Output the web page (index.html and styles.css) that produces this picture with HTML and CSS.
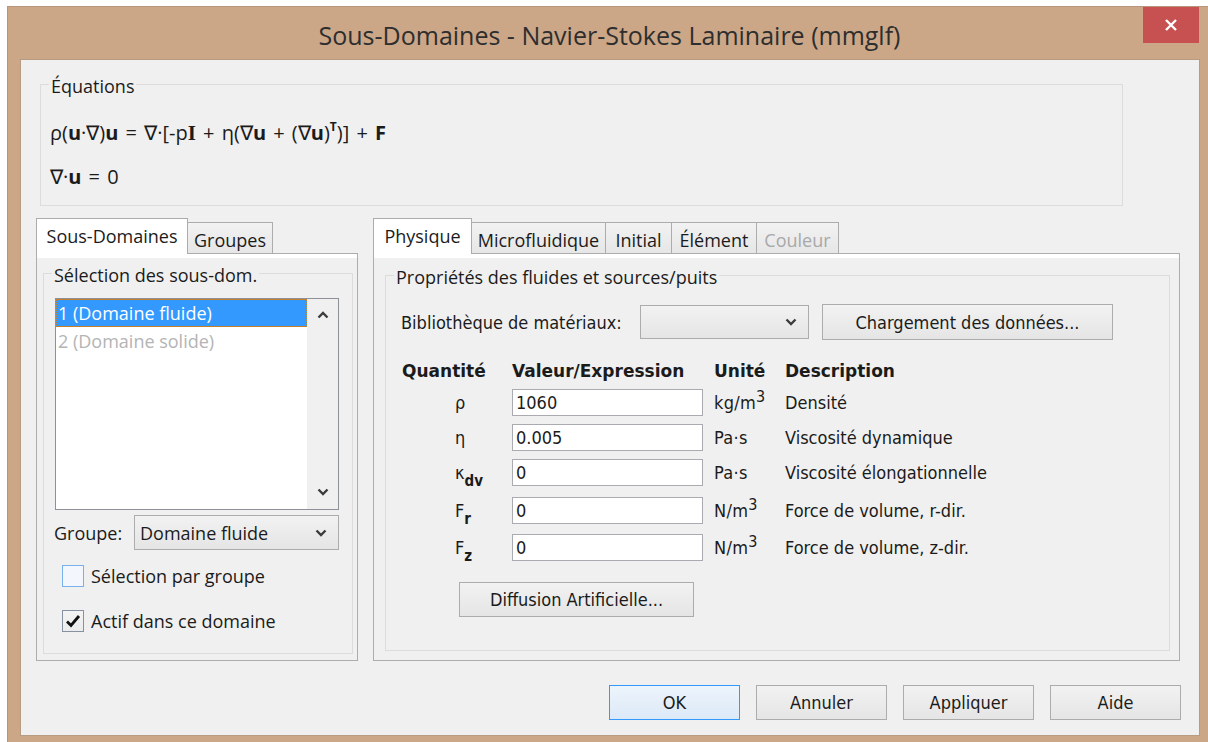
FILE: index.html
```html
<!DOCTYPE html>
<html lang="fr">
<head>
<meta charset="utf-8">
<title>Sous-Domaines - Navier-Stokes Laminaire (mmglf)</title>
<link rel="stylesheet" href="styles.css">
</head>
<body>
<div class="window">
  <div class="titlebar">
    <span></span>
    <div class="title">Sous-Domaines - Navier-Stokes Laminaire (mmglf)</div>
    <button class="close" type="button" aria-label="Fermer">
      <svg width="14" height="14" viewBox="0 0 14 14"><path d="M2 2 L12 12 M12 2 L2 12" stroke="#fff" stroke-width="2.4" fill="none"/></svg>
    </button>
  </div>

  <div class="client">
    <div class="group eq">
      <div class="group-title">Équations</div>
      <div class="eq-body">
        <div class="eq-line">ρ(<b>u</b>·∇)<b>u</b> = ∇·[-p<b class="serif">I</b> + η(∇<b>u</b> + (∇<b>u</b>)<sup>T</sup>)] + <b>F</b></div>
        <div class="eq-line">∇·<b>u</b> = 0</div>
      </div>
    </div>

    <div class="panels">
      <section class="tabbox tabbox-left">
        <div class="tabs">
          <div class="tab active w-sd">Sous-Domaines</div>
          <div class="tab w-grp">Groupes</div>
        </div>
        <div class="page">
          <div class="group sel">
            <div class="group-title">Sélection des sous-dom.</div>
            <div class="listbox">
              <ul class="items">
                <li class="item selected">1 (Domaine fluide)</li>
                <li class="item disabled">2 (Domaine solide)</li>
              </ul>
              <div class="vscroll">
                <svg class="chev" width="12" height="8" viewBox="0 0 12 8"><path d="M1.5 6.5 L6 2 L10.5 6.5" stroke="#3c3c3c" stroke-width="2.4" fill="none"/></svg>
                <svg class="chev" width="12" height="8" viewBox="0 0 12 8"><path d="M1.5 1.5 L6 6 L10.5 1.5" stroke="#3c3c3c" stroke-width="2.4" fill="none"/></svg>
              </div>
            </div>
            <div class="group-row">
              <span class="lbl">Groupe:</span>
              <div class="combo combo-group">
                <span>Domaine fluide</span>
                <svg width="12" height="8" viewBox="0 0 12 8"><path d="M1.5 1.5 L6 6 L10.5 1.5" stroke="#3c3c3c" stroke-width="2.4" fill="none"/></svg>
              </div>
            </div>
            <div class="check first">
              <span class="box box-hover"></span>
              <span class="lbl">Sélection par groupe</span>
            </div>
            <div class="check">
              <span class="box box-on">
                <svg width="20" height="20" viewBox="0 0 20 20"><path d="M4 10.5 L8 14.5 L16 5" stroke="#111" stroke-width="2.8" fill="none"/></svg>
              </span>
              <span class="lbl">Actif dans ce domaine</span>
            </div>
          </div>
        </div>
      </section>

      <section class="tabbox tabbox-right">
        <div class="tabs">
          <div class="tab active w-phy">Physique</div>
          <div class="tab w-mic">Microfluidique</div>
          <div class="tab w-ini">Initial</div>
          <div class="tab w-ele">Élément</div>
          <div class="tab w-col off">Couleur</div>
        </div>
        <div class="page">
          <div class="group props">
            <div class="group-title">Propriétés des fluides et sources/puits</div>
            <div class="lib-row">
              <span class="tlbl lib-lbl">Bibliothèque de matériaux:</span>
              <div class="combo combo-lib">
                <span></span>
                <svg width="12" height="8" viewBox="0 0 12 8"><path d="M1.5 1.5 L6 6 L10.5 1.5" stroke="#3c3c3c" stroke-width="2.4" fill="none"/></svg>
              </div>
              <button class="btn btn-load" type="button">Chargement des données...</button>
            </div>

            <div class="table">
              <div class="th">Quantité</div>
              <div class="th">Valeur/Expression</div>
              <div class="th">Unité</div>
              <div class="th">Description</div>

              <div class="sym">ρ</div>
              <div><input class="tb" type="text" value="1060"></div>
              <div class="unit">kg/m<sup>3</sup></div>
              <div class="desc">Densité</div>

              <div class="sym">η</div>
              <div><input class="tb" type="text" value="0.005"></div>
              <div class="unit">Pa·s</div>
              <div class="desc">Viscosité dynamique</div>

              <div class="sym">κ<sub>dv</sub></div>
              <div><input class="tb" type="text" value="0"></div>
              <div class="unit">Pa·s</div>
              <div class="desc">Viscosité élongationnelle</div>

              <div class="sym">F<sub>r</sub></div>
              <div><input class="tb" type="text" value="0"></div>
              <div class="unit">N/m<sup>3</sup></div>
              <div class="desc">Force de volume, r-dir.</div>

              <div class="sym">F<sub>z</sub></div>
              <div><input class="tb" type="text" value="0"></div>
              <div class="unit">N/m<sup>3</sup></div>
              <div class="desc">Force de volume, z-dir.</div>
            </div>

            <button class="btn btn-diff" type="button">Diffusion Artificielle...</button>
          </div>
        </div>
      </section>
    </div>

    <div class="buttons">
      <button class="btn dlg default" type="button">OK</button>
      <button class="btn dlg" type="button">Annuler</button>
      <button class="btn dlg" type="button">Appliquer</button>
      <button class="btn dlg" type="button">Aide</button>
    </div>
  </div>
</div>
</body>
</html>
```

FILE: styles.css
```css
* { box-sizing: border-box; }

html, body {
  margin: 0;
  padding: 0;
}

body {
  width: 1208px;
  height: 742px;
  overflow: hidden;
  background: #ffffff;
  font-family: "Open Sans", "Noto Sans", sans-serif;
  font-size: 18px;
  color: #1b1b1b;
}

/* ---------- window frame ---------- */
.window {
  margin: 6px 0 0 7px;
  width: 1206px;
  background: #cba788;
  border: 1px solid #b8957a;
  padding: 0 13px 13px 13px;
}

.titlebar {
  height: 53px;
  display: grid;
  grid-template-columns: 55px 1fr 56px;
  align-items: start;
}

.title {
  margin-top: 12px;
  line-height: 32px;
  text-align: center;
  font-size: 25px;
  color: #2e2e2e;
}

.close {
  margin: 0;
  width: 56px;
  height: 36px;
  border: 0;
  padding: 0;
  background: #c75050;
  display: flex;
  align-items: center;
  justify-content: center;
}

.client {
  width: 1178px;
  height: 675px;
  background: #f0f0f0;
  box-shadow: 0 0 0 1px #b89c82;
  display: flex;
  flex-direction: column;
}

/* ---------- group boxes ---------- */
.group {
  border: 1px solid #dcdcdc;
}

.group-title {
  width: fit-content;
  margin: -10px 0 0 8px;
  padding: 0 2px;
  line-height: 22px;
  background: #f0f0f0;
  white-space: nowrap;
}

.eq {
  margin: 24px 0 0 19px;
  width: 1083px;
  height: 122px;
}

.eq-body {
  padding: 14px 0 0 9px;
}

.eq-line {
  line-height: 44px;
  font-family: "Open Sans", "Noto Sans", sans-serif;
  font-size: 20px;
  word-spacing: 2px;
  white-space: nowrap;
}

.eq-line b { font-weight: 700; }
.eq-line b.serif { font-family: "Liberation Serif", serif; font-size: 21px; }
.eq-line sup { font-size: 12px; font-weight: 700; vertical-align: 9px; line-height: 0; }

/* ---------- tab controls ---------- */
.panels {
  display: flex;
  margin-top: 12px;
}

.tabbox { display: flex; flex-direction: column; }
.tabbox-left { margin-left: 15px; width: 322px; }
.tabbox-right { margin-left: 15px; width: 807px; }

.tabs {
  display: flex;
  align-items: flex-end;
  height: 36px;
}

.tab {
  height: 32px;
  border: 1px solid #acacac;
  border-bottom: 0;
  background: linear-gradient(#f2f2f2, #e6e6e6);
  line-height: 30px;
  padding-top: 2px;
  text-align: center;
  white-space: nowrap;
}

.tab + .tab { margin-left: -1px; }

.tab.active {
  position: relative;
  z-index: 1;
  height: 36px;
  background: #ffffff;
  line-height: 34px;
  padding-top: 0;
}

.tab.off { color: #a8a8a8; }

.w-sd  { width: 152px; }
.w-grp { width: 86px; }
.w-phy { width: 99px; }
.w-mic { width: 135px; }
.w-ini { width: 67px; }
.w-ele { width: 86px; }
.w-col { width: 83px; }

.page {
  margin-top: -1px;
  height: 408px;
  border: 1px solid #adadad;
  background: #f0f0f0;
  box-shadow: inset 0 4px 0 #ffffff;
  display: flex;
  flex-direction: column;
}

/* ---------- left page ---------- */
.sel {
  margin: 19px 4px 6px 6px;
  flex: 1;
}

.listbox {
  margin: 12px 0 0 11px;
  width: 284px;
  height: 212px;
  border: 1px solid #8e9198;
  background: #ffffff;
  display: flex;
}

.items {
  list-style: none;
  margin: 0;
  padding: 0;
  flex: 1;
}

.item {
  height: 28px;
  line-height: 26px;
  padding-left: 1px;
  border: 1px solid transparent;
  white-space: nowrap;
}

.item.selected {
  background: #3399ff;
  color: #ffffff;
  border: 1px dotted #c8822a;
}

.item.disabled { color: #b4b4b4; }

.vscroll {
  width: 31px;
  background: #f0f0f0;
  display: flex;
  flex-direction: column;
  align-items: center;
  justify-content: space-between;
  padding: 12px 0 13px;
}

.group-row {
  display: flex;
  align-items: center;
  margin: 5px 0 0 10px;
  width: 285px;
}

.combo {
  height: 35px;
  border: 1px solid #acacac;
  background: linear-gradient(#f2f2f2, #e5e5e5);
  display: flex;
  align-items: center;
  justify-content: space-between;
  padding: 0 11px 0 5px;
}

.combo-group { margin-left: auto; width: 205px; }

.check {
  display: flex;
  align-items: center;
  gap: 7px;
  margin: 23px 0 0 18px;
  height: 22px;
}

.check.first { margin-top: 15px; }

.box {
  width: 22px;
  height: 22px;
  border: 1px solid #707070;
  background: #ffffff;
  display: flex;
  align-items: center;
  justify-content: center;
}

.box-hover {
  border-color: #76b1ec;
  background: #f3f7fd;
}

.box-on {
  border-color: #8791a2;
  background: linear-gradient(#f4f4f4, #ececec);
}

/* ---------- right page ---------- */
.props {
  margin: 21px 9px 9px 11px;
  flex: 1;
  font-family: "DejaVu Sans Condensed", "DejaVu Sans", sans-serif;
  font-stretch: condensed;
  font-size: 18px;
}

.props .group-title {
  font-family: "Open Sans", "Noto Sans", sans-serif;
  font-stretch: normal;
  font-size: 18px;
}

.lib-row {
  display: flex;
  align-items: center;
  margin: 16px 0 0 15px;
  height: 36px;
}

.lib-lbl { width: 239px; white-space: nowrap; }

.combo-lib { width: 169px; height: 34px; }

.btn {
  font: inherit;
  color: #1b1b1b;
  border: 1px solid #acacac;
  background: linear-gradient(#f2f2f2, #e5e5e5);
  padding: 0;
  margin: 0;
  white-space: nowrap;
}

.btn-load {
  margin-left: 13px;
  width: 291px;
  height: 36px;
}

.table {
  display: grid;
  grid-template-columns: 110px 202px 71px 1fr;
  grid-template-rows: 31px 35px 35px 38px 37px 27px;
  margin: 18px 0 0 16px;
  align-items: start;
}

.th {
  font-family: "DejaVu Sans", sans-serif;
  font-stretch: normal;
  font-weight: 700;
  font-size: 17px;
  line-height: 26px;
  white-space: nowrap;
}

.sym {
  padding-left: 53px;
  line-height: 27px;
  font-size: 18px;
  white-space: nowrap;
}

.sym sub {
  font-size: 15px;
  font-weight: 700;
  vertical-align: -7px;
  line-height: 0;
}

.tb {
  display: block;
  width: 191px;
  height: 27px;
  margin: 0;
  border: 1px solid #a9abb1;
  background: #ffffff;
  padding: 0 0 0 3px;
  font: inherit;
  color: #1b1b1b;
}

.unit {
  line-height: 27px;
  white-space: nowrap;
  letter-spacing: 0.3px;
}

.unit sup {
  font-size: 16px;
  vertical-align: 7px;
  line-height: 0;
}

.desc {
  line-height: 27px;
  white-space: nowrap;
}

.btn-diff {
  display: block;
  margin: 21px 0 0 73px;
  width: 235px;
  height: 35px;
}

/* ---------- dialog buttons ---------- */
.buttons {
  display: flex;
  justify-content: flex-end;
  gap: 16px;
  margin: 24px 18px 0 0;
}

.btn.dlg {
  width: 131px;
  height: 35px;
  font-family: "DejaVu Sans Condensed", "DejaVu Sans", sans-serif;
  font-stretch: condensed;
  font-size: 18px;
}

.btn.dlg.default {
  border-color: #3399ff;
  background: linear-gradient(#edf4fc, #dce9f7);
}
```
